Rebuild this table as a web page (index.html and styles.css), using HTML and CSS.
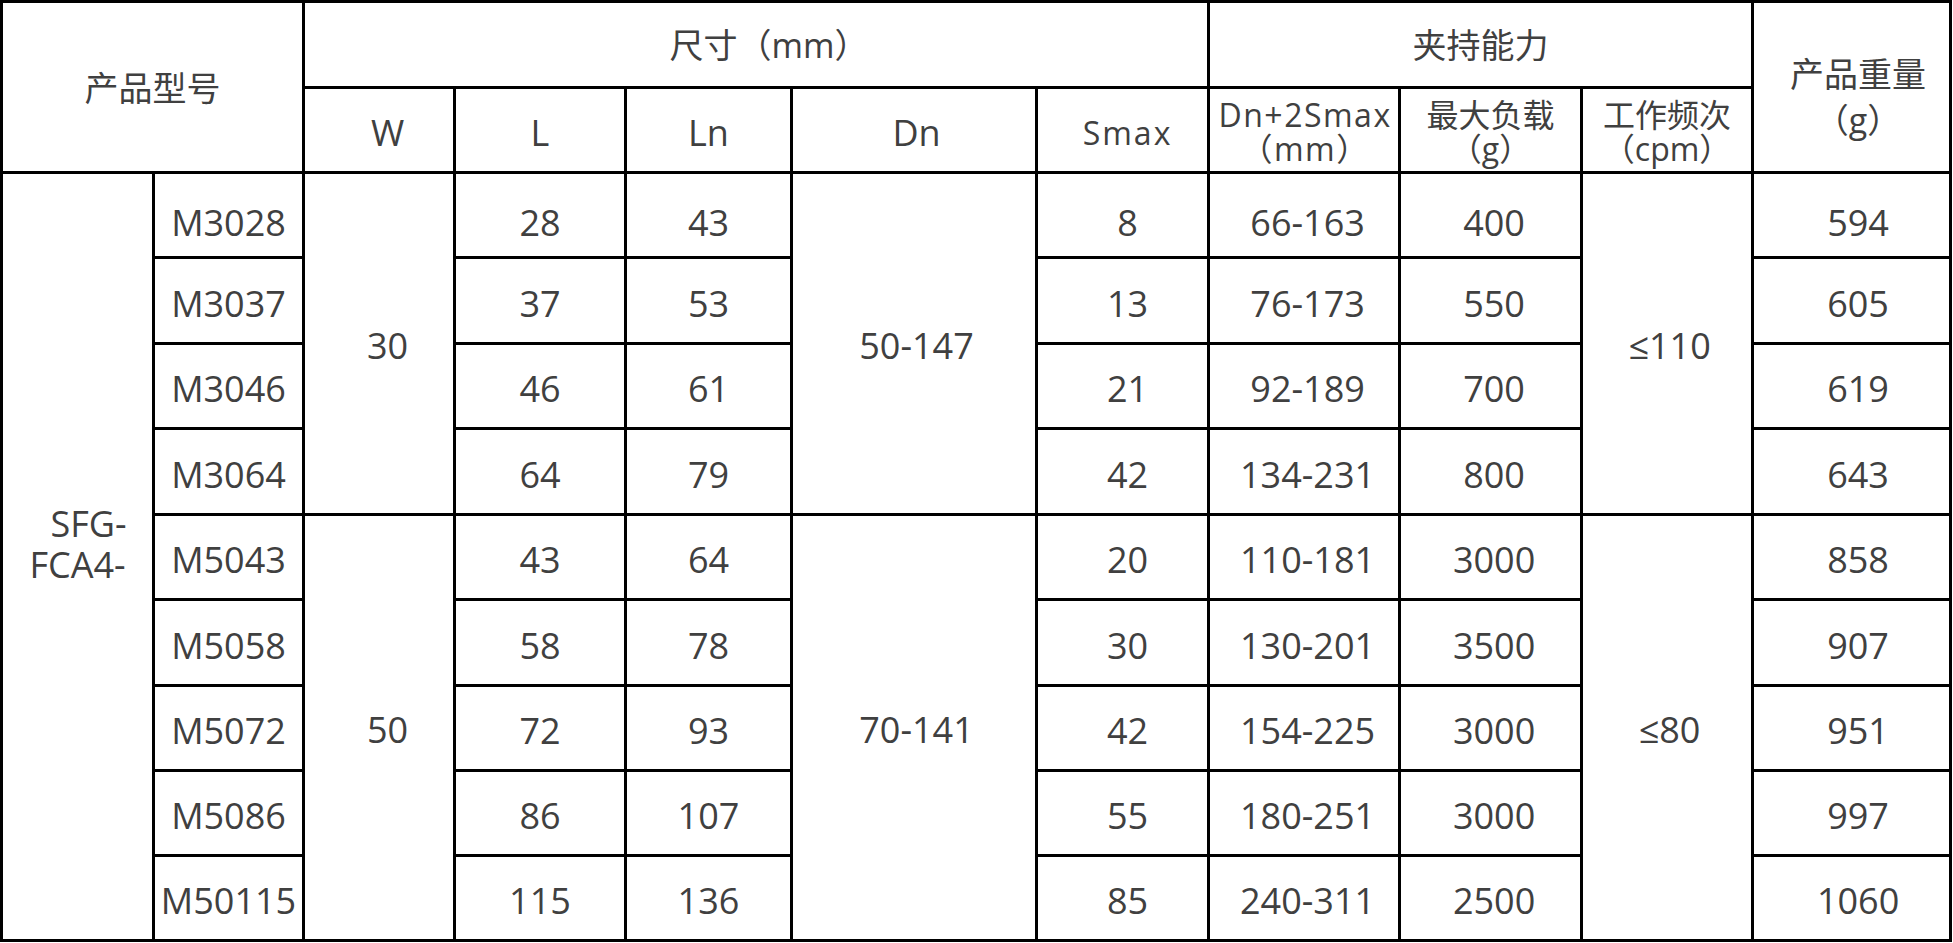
FILE: index.html
```html
<!DOCTYPE html>
<html lang="zh">
<head>
<meta charset="utf-8">
<title>SFG-FCA4 参数表</title>
<link rel="stylesheet" href="styles.css">
</head>
<body>
<table class="spec">
  <colgroup>
    <col class="c1"><col class="c2"><col class="c3"><col class="c4"><col class="c5"><col class="c6">
    <col class="c7"><col class="c8"><col class="c9"><col class="c10"><col class="c11">
  </colgroup>
  <thead>
    <tr class="h1">
      <th colspan="2" rowspan="2" class="cjk">产品型号</th>
      <th colspan="5" class="cjk size">尺寸（mm）</th>
      <th colspan="3" class="cjk">夹持能力</th>
      <th rowspan="2" class="cjk weight pg">产品重量<br>（g）</th>
    </tr>
    <tr class="h2">
      <th class="pw">W</th>
      <th>L</th>
      <th>Ln</th>
      <th class="pd">Dn</th>
      <th class="small ps">Smax</th>
      <th class="two wide">Dn+2Smax<br>（mm）</th>
      <th class="two">最大负载<br>（g）</th>
      <th class="two">工作频次<br>（cpm）</th>
    </tr>
  </thead>
  <tbody>
    <tr class="r85 first">
      <td rowspan="9" class="series span"><span class="l1">SFG-</span><br>FCA4-</td>
      <td>M3028</td>
      <td rowspan="4" class="span pw">30</td>
      <td>28</td><td>43</td>
      <td rowspan="4" class="span pd">50-147</td>
      <td class="ps">8</td><td class="pr">66-163</td><td class="pl">400</td>
      <td rowspan="4" class="span pf">≤110</td>
      <td class="pg">594</td>
    </tr>
    <tr class="r86">
      <td>M3037</td><td>37</td><td>53</td><td class="ps">13</td><td class="pr">76-173</td><td class="pl">550</td><td class="pg">605</td>
    </tr>
    <tr class="r85">
      <td>M3046</td><td>46</td><td>61</td><td class="ps">21</td><td class="pr">92-189</td><td class="pl">700</td><td class="pg">619</td>
    </tr>
    <tr class="r86">
      <td>M3064</td><td>64</td><td>79</td><td class="ps">42</td><td class="pr">134-231</td><td class="pl">800</td><td class="pg">643</td>
    </tr>
    <tr class="r85">
      <td>M5043</td>
      <td rowspan="5" class="span pw">50</td>
      <td>43</td><td>64</td>
      <td rowspan="5" class="span pd">70-141</td>
      <td class="ps">20</td><td class="pr">110-181</td><td class="pl">3000</td>
      <td rowspan="5" class="span pf">≤80</td>
      <td class="pg">858</td>
    </tr>
    <tr class="r86">
      <td>M5058</td><td>58</td><td>78</td><td class="ps">30</td><td class="pr">130-201</td><td class="pl">3500</td><td class="pg">907</td>
    </tr>
    <tr class="r85">
      <td>M5072</td><td>72</td><td>93</td><td class="ps">42</td><td class="pr">154-225</td><td class="pl">3000</td><td class="pg">951</td>
    </tr>
    <tr class="r85">
      <td>M5086</td><td>86</td><td>107</td><td class="ps">55</td><td class="pr">180-251</td><td class="pl">3000</td><td class="pg">997</td>
    </tr>
    <tr class="r85">
      <td>M50115</td><td>115</td><td>136</td><td class="ps">85</td><td class="pr">240-311</td><td class="pl">2500</td><td class="pg">1060</td>
    </tr>
  </tbody>
</table>
</body>
</html>
```
FILE: styles.css
```css
html, body {
  margin: 0;
  padding: 0;
  background: #ffffff;
}

.spec {
  border-collapse: collapse;
  table-layout: fixed;
  width: 1952px;
  font-family: "Open Sans", "Noto Sans CJK SC", sans-serif;
  color: #404040;
  font-size: 36px;
}

.c1 { width: 152px; }
.c2 { width: 150px; }
.c3 { width: 151px; }
.c4 { width: 171px; }
.c5 { width: 166px; }
.c6 { width: 245px; }
.c7 { width: 172px; }
.c8 { width: 191px; }
.c9 { width: 182px; }
.c10 { width: 171px; }
.c11 { width: 198px; }

.spec th,
.spec td {
  border: 3px solid #000000;
  padding: 6px 0 0 0;
  text-align: center;
  vertical-align: middle;
  font-weight: normal;
  white-space: nowrap;
  line-height: 1.2;
}

.h1 { height: 86px; }
.h2 { height: 85px; }
.r85 { height: 85px; }
.r86 { height: 86px; }

.spec .first td:not(.span) {
  padding-top: 16px;
}

.spec td.span {
  padding-top: 4px;
}

/* horizontal nudges per column */
.spec .pw { padding-left: 17px; }
.spec .pd { padding-left: 5px; }
.spec .ps { padding-left: 10px; }
.spec .pr { padding-left: 7px; }
.spec .pl { padding-left: 7px; }
.spec .pf { padding-left: 5px; }
.spec .pg { padding-left: 13px; }

.spec th.cjk {
  font-size: 34px;
  padding-top: 2px;
}

.spec th.size {
  padding-left: 26px;
}

.spec th.weight {
  line-height: 46px;
  padding-top: 20px;
}

.spec th.small {
  font-size: 32px;
  letter-spacing: 2px;
  padding-top: 6px;
}

.spec th.two {
  font-size: 32px;
  line-height: 34px;
  padding-top: 4px;
}

.spec th.wide {
  letter-spacing: 1.5px;
  padding-left: 2px;
}

.spec td.series {
  line-height: 41px;
  padding: 0 0 26px 0;
}

.series .l1 {
  display: inline-block;
  padding-left: 22px;
}
```
